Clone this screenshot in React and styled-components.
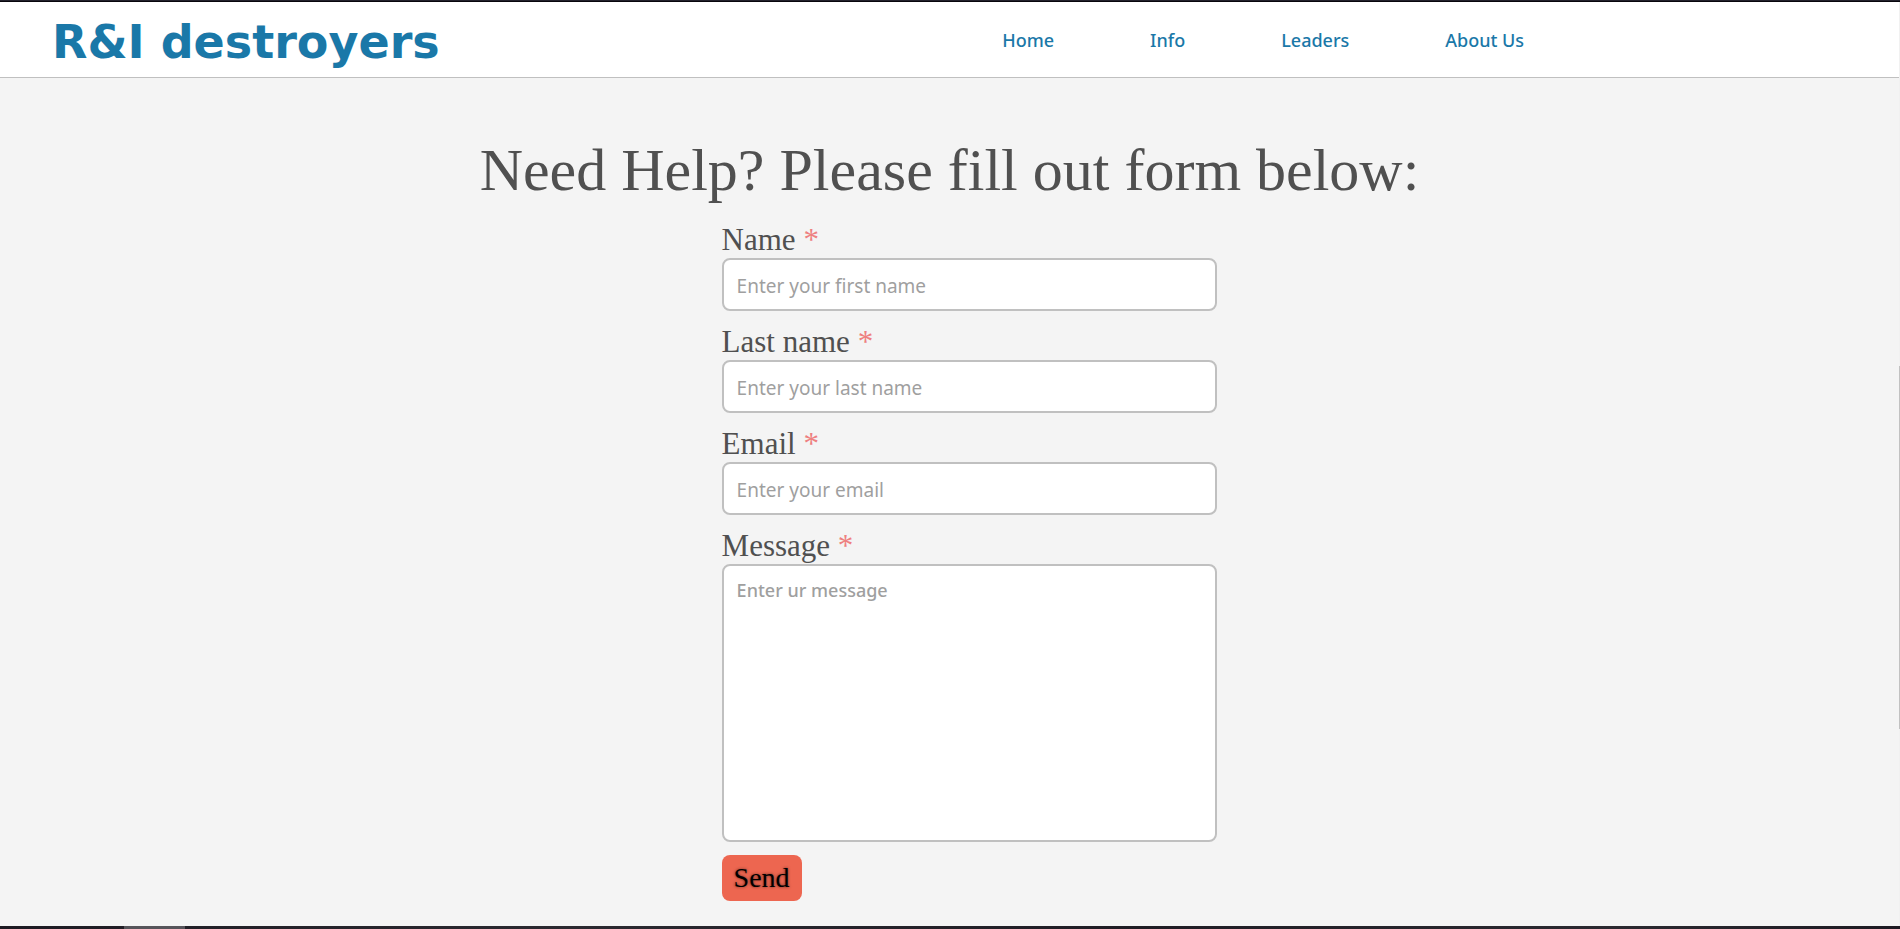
import React from "react";
import styled, { createGlobalStyle } from "styled-components";

const GlobalStyle = createGlobalStyle`
  *, *::before, *::after { box-sizing: border-box; }
  body {
    margin: 0;
    background: #f4f4f4;
    color: #505050;
    font-family: "Times New Roman", "Liberation Serif", serif;
  }
`;

const Page = styled.div`
  display: flex;
  flex-direction: column;
  min-height: 100vh;
`;

const TopEdge = styled.div`
  height: 2px;
  background: #23222c;
  border-bottom: 1px solid #08060c;
`;

const BottomEdge = styled.div`
  display: grid;
  grid-template-columns: 124px 61px 1fr;
  height: 3px;
  background: linear-gradient(90deg, #1d1a22, #2b2930 30%, #1f1c24 60%, #2b2930 85%, #1d1a22);
`;

const EdgeTab = styled.span`
  grid-column: 2;
  background: #56545a;
`;

const Viewport = styled.div`
  display: flex;
  flex: 1;
`;

const Content = styled.div`
  flex: 1;
  min-width: 0;
`;

const ScrollRail = styled.div`
  display: grid;
  grid-template-rows: 364fr 363fr 197fr;
  width: 1px;
  background: #f1f1f1;
`;

const ScrollThumb = styled.span`
  grid-row: 2;
  background: #c1c1c1;
`;

const Header = styled.header`
  display: grid;
  grid-template-columns: 19fr 17fr;
  align-items: center;
  height: 76px;
  background: #ffffff;
  border-bottom: 1px solid #c0c0c0;
`;

const Logo = styled.a`
  display: block;
  padding: 4px 0 0 52px;
  color: #1a78a8;
  font: 700 46px/60px "DejaVu Sans", sans-serif;
  text-decoration: none;
  white-space: nowrap;
`;

const Nav = styled.nav`
  display: flex;
  gap: 96px;
`;

const NavLink = styled.a`
  color: #1a78a8;
  font: 500 18px/24px "Noto Sans", sans-serif;
  text-decoration: none;
  white-space: nowrap;
`;

const Title = styled.h1`
  margin: 57px 0 17px;
  font-size: 60px;
  font-weight: 400;
  line-height: 70px;
  text-align: center;
`;

const Form = styled.form`
  display: flex;
  flex-direction: column;
  align-items: flex-start;
  gap: 13px;
  width: 495px;
  max-width: 62%;
  margin-left: 38%;
  padding-bottom: 24px;
`;

const Field = styled.div`
  display: flex;
  flex-direction: column;
  width: 100%;
`;

const Label = styled.label`
  font-size: 31px;
  line-height: 36px;
`;

const Required = styled.span`
  color: #ee8080;
`;

const control = `
  width: 100%;
  border: 2px solid #c0c0c0;
  border-radius: 8px;
  background: #ffffff;
  color: #505050;
  outline: none;
  &::placeholder { color: #9f9f9f; opacity: 1; }
`;

const TextInput = styled.input`
  ${control}
  height: 53px;
  padding: 2px 13px 0;
  font: 400 19px/24px "Noto Sans", sans-serif;
`;

const MessageBox = styled.textarea`
  ${control}
  display: block;
  height: 278px;
  padding: 12px 13px;
  font: 500 18px/24px "Noto Sans", sans-serif;
  resize: none;
`;

const SendButton = styled.button`
  height: 46px;
  padding: 0 12px;
  border: 0;
  border-radius: 8px;
  background: #ed6650;
  color: #000000;
  font: 400 28px/32px "Times New Roman", "Liberation Serif", serif;
  text-shadow: 0 0 3px rgba(0, 0, 0, 0.6);
`;

const links = ["Home", "Info", "Leaders", "About Us"];

const fields = [
  { id: "first-name", label: "Name", type: "text", hint: "Enter your first name" },
  { id: "last-name", label: "Last name", type: "text", hint: "Enter your last name" },
  { id: "email", label: "Email", type: "email", hint: "Enter your email" },
];

function FieldLabel({ id, children }) {
  return (
    <Label htmlFor={id}>
      {children} <Required>*</Required>
    </Label>
  );
}

export default function App() {
  return (
    <Page>
      <GlobalStyle />
      <TopEdge />
      <Viewport>
        <Content>
          <Header>
            <Logo href="#">R&amp;I destroyers</Logo>
            <Nav>
              {links.map((text) => (
                <NavLink key={text} href="#">{text}</NavLink>
              ))}
            </Nav>
          </Header>
          <main>
            <Title>Need Help? Please fill out form below:</Title>
            <Form onSubmit={(event) => event.preventDefault()}>
              {fields.map(({ id, label, type, hint }) => (
                <Field key={id}>
                  <FieldLabel id={id}>{label}</FieldLabel>
                  <TextInput id={id} type={type} placeholder={hint} />
                </Field>
              ))}
              <Field>
                <FieldLabel id="message">Message</FieldLabel>
                <MessageBox id="message" placeholder="Enter ur message" />
              </Field>
              <SendButton type="submit">Send</SendButton>
            </Form>
          </main>
        </Content>
        <ScrollRail>
          <ScrollThumb />
        </ScrollRail>
      </Viewport>
      <BottomEdge>
        <EdgeTab />
      </BottomEdge>
    </Page>
  );
}
